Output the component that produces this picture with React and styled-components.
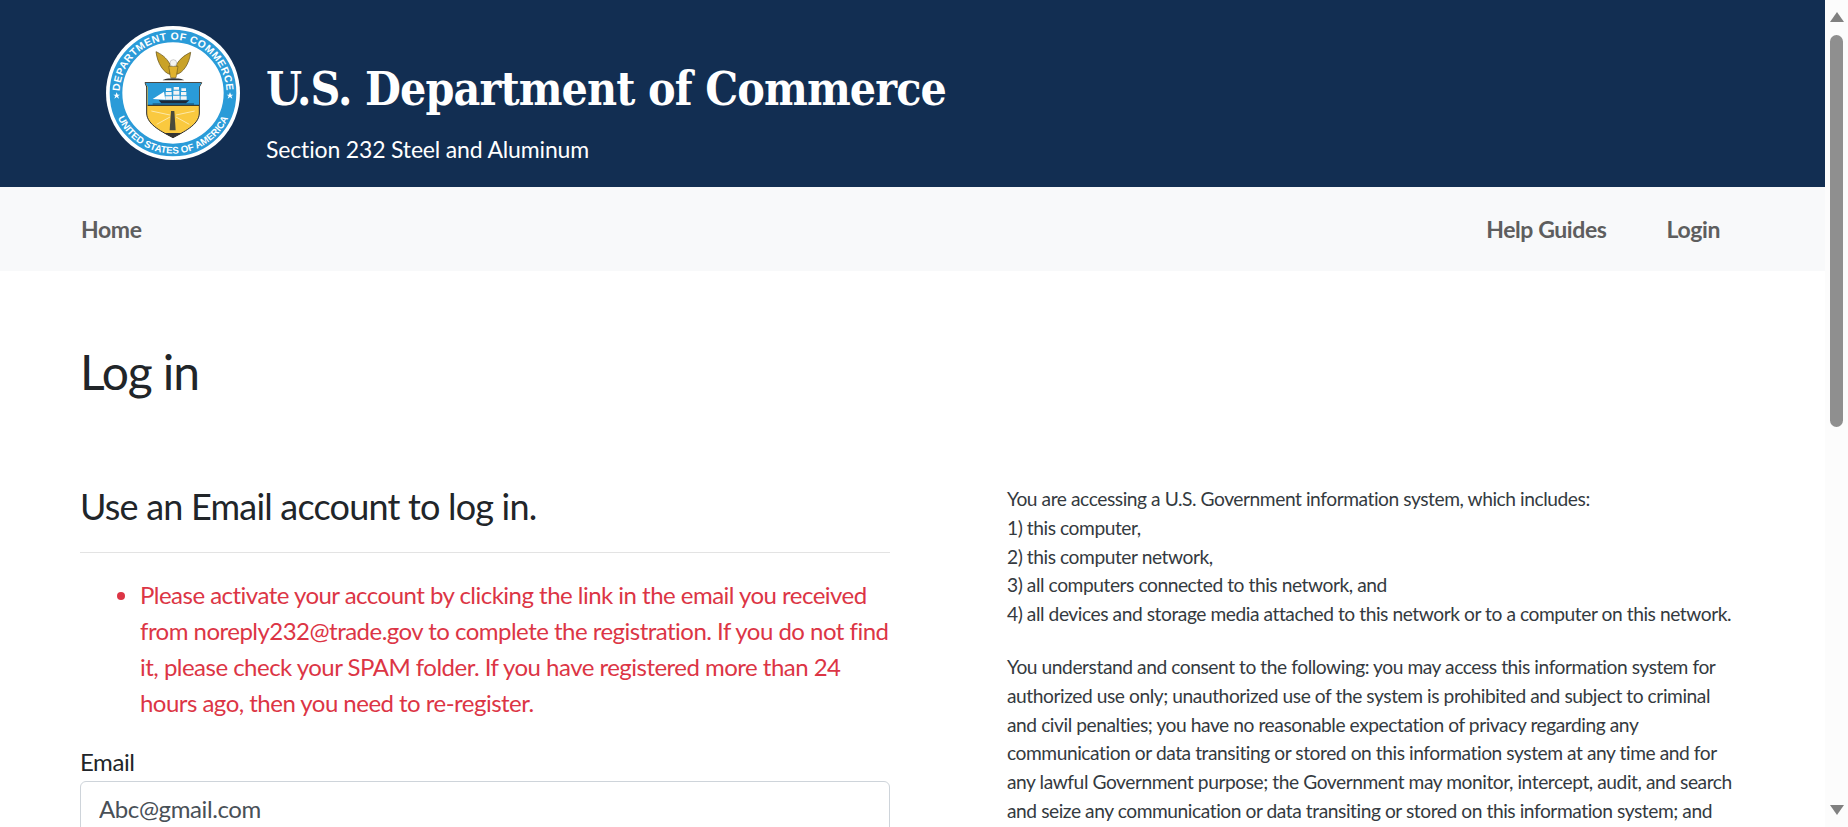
import React from 'react';
import styled, { createGlobalStyle } from 'styled-components';

const GlobalStyle = createGlobalStyle`
	html, body {
		margin: 0;
		height: 100%;
		overflow: hidden;
		background: #fff;
	}
	#root {
		height: 100%;
	}
	* {
		box-sizing: border-box;
	}
`;

const BODY_FONT = '"Lato", "Noto Sans", sans-serif';

const Shell = styled.div`
	display: flex;
	height: 827px;
	overflow: hidden;
	font-family: ${BODY_FONT};
	color: #212529;
`;

const Page = styled.div`
	flex: 1;
	min-width: 0;
	overflow: hidden;
`;

const ScrollRail = styled.div`
	display: flex;
	flex-direction: column;
	align-items: center;
	width: 23px;
	padding-top: 12px;
	background: #fcfcfc;
`;

const ScrollThumb = styled.div`
	width: 13px;
	height: 392px;
	margin: 13px 0 auto;
	border-radius: 7px;
	background: #8f8f8f;
`;

const ScrollArrow = styled.svg`
	display: block;
	width: 14px;
	height: 10px;
	margin-bottom: ${(props) => (props.$down ? '12px' : '0')};
	fill: #808080;
`;

const Banner = styled.header`
	display: flex;
	align-items: flex-start;
	height: 187px;
	padding: 26px 0 0 106px;
	background: #122e52;
	color: #fff;
`;

const SealSvg = styled.svg`
	flex: none;
	width: 134px;
	height: 134px;
`;

const BannerText = styled.div`
	display: flex;
	flex-direction: column;
	margin-left: 26px;
`;

const BannerTitle = styled.h1`
	margin: 37px 0 0;
	font-family: 'DejaVu Serif', serif;
	font-stretch: condensed;
	font-size: 46px;
	line-height: 52px;
	font-weight: 700;
	letter-spacing: -0.87px;
	white-space: nowrap;
`;

const BannerSub = styled.div`
	margin-top: 20px;
	font-size: 23px;
	line-height: 28px;
	letter-spacing: -0.16px;
`;

const NavBar = styled.nav`
	display: flex;
	align-items: center;
	justify-content: space-between;
	height: 84px;
	padding: 0 105px 0 81px;
	background: #f8f9fa;
`;

const NavGroup = styled.div`
	display: flex;
	gap: 60px;
`;

const NavLink = styled.a`
	color: #5e5e5e;
	font-size: 23px;
	font-weight: 700;
	letter-spacing: -0.4px;
	line-height: 30px;
	text-decoration: none;
`;

const Content = styled.main`
	padding: 0 80px;
`;

const PageTitle = styled.h1`
	margin: 69px 0 0;
	font-size: 48px;
	font-weight: 400;
	letter-spacing: -1.1px;
	line-height: 64px;
`;

const Columns = styled.div`
	display: grid;
	grid-template-columns: 810px 735px;
	column-gap: 117px;
	margin-top: 80px;
`;

const SectionTitle = styled.h2`
	margin: 0;
	padding-bottom: 24px;
	border-bottom: 1px solid #e3e3e3;
	font-size: 36px;
	font-weight: 400;
	letter-spacing: -0.8px;
	line-height: 44px;
`;

const ErrorList = styled.ul`
	margin: 24px 0 0;
	padding: 0 0 0 60px;
	color: #dc3545;
	font-size: 24px;
	letter-spacing: -0.52px;
	line-height: 36px;
`;

const FieldLabel = styled.label`
	display: block;
	margin-top: 23px;
	font-size: 24px;
	letter-spacing: -0.4px;
	line-height: 36px;
`;

const TextInput = styled.input`
	display: block;
	width: 100%;
	height: 58px;
	margin-top: 1px;
	padding: 0 18px 4px;
	border: 1px solid #ced4da;
	border-radius: 6px;
	color: #495057;
	font-family: ${BODY_FONT};
	font-size: 24px;
	letter-spacing: -0.4px;
`;

const Notice = styled.div`
	margin-top: 1px;
	color: #343a40;
	font-size: 19.2px;
	letter-spacing: -0.44px;
	line-height: 28.8px;
`;

const NoticeBlock = styled.p`
	margin: 0 0 24px;
`;

const Seal = () => (
	<SealSvg viewBox="48 45 402 402">
		<defs>
			<path id="sealTop" d="M 91.4 273.8 A 160 160 0 1 1 406.6 273.8" />
			<path id="sealBottom" d="M 69.8 277.6 A 182 182 0 0 0 428.2 277.6" />
		</defs>
		<circle cx="249" cy="246" r="201" fill="#fff" />
		<circle cx="249" cy="246" r="171" fill="none" stroke="#2a9bd8" strokeWidth="38" />
		<text fill="#fff" fontFamily="Liberation Sans" fontWeight="700" fontSize="31" letterSpacing="1.5">
			<textPath href="#sealTop" startOffset="50%" textAnchor="middle">DEPARTMENT OF COMMERCE</textPath>
		</text>
		<text fill="#fff" fontFamily="Liberation Sans" fontWeight="700" fontSize="29">
			<textPath href="#sealBottom" startOffset="50%" textAnchor="middle">UNITED STATES OF AMERICA</textPath>
		</text>
		<path d="M80 244l3 7h7l-6 4 3 8-7-5-7 5 3-8-6-4h7z" fill="#fff" />
		<path d="M420 244l3 7h7l-6 4 3 8-7-5-7 5 3-8-6-4h7z" fill="#fff" />

		{/* eagle */}
		<path d="M198 122c14 6 32 18 42 38v30c-18-4-38-32-42-68z" fill="#c9a227" stroke="#5c4a12" strokeWidth="2" />
		<path d="M302 124c-14 6-32 18-42 36v30c18-4 38-30 42-66z" fill="#c9a227" stroke="#5c4a12" strokeWidth="2" />
		<path d="M236 166l28 0-6 34h-16z" fill="#e0b22e" stroke="#5c4a12" strokeWidth="1.5" />
		<circle cx="250" cy="156" r="10" fill="#f4f4f0" stroke="#777" strokeWidth="1" />
		<path d="M218 208c8-8 56-8 64 0z" fill="#333" />

		{/* shield */}
		<path d="M165 215h170l-7 13v78c0 36-50 58-79 74-29-16-79-38-79-74v-78z" fill="#fac93f" stroke="#2b2b2b" strokeWidth="3" />
		<path d="M166 216h168l-7 12v55h-154v-55z" fill="#2a9bd8" />
		<path d="M173 283h154" stroke="#222" strokeWidth="3" />

		{/* ship */}
		<path d="M188 264l34-22 4 24z" fill="#fff" />
		<path d="M228 232h16v8h-16zM227 243h18v10h-18zM226 256h20v10h-20zM251 228h16v8h-16zM250 239h18v12h-18zM249 254h20v12h-20zM274 232h14v8h-14zM273 243h16v10h-16zM272 256h18v10h-18z" fill="#f4f4f4" />
		<path d="M206 268h92l-10 9h-74z" fill="#1d2a3a" />
		<path d="M188 279h124" stroke="#16425f" strokeWidth="3" />

		{/* lighthouse */}
		<path d="M184 300l56 12M314 300l-56 12M200 340l40-22M298 340l-40-22" stroke="#fde9a8" strokeWidth="3" />
		<path d="M243 300h10l4 58h-18z" fill="#4a4a3c" />
		<path d="M222 366h54l-27 14z" fill="#333" />
	</SealSvg>
);

export default function App() {
	return (
		<>
			<GlobalStyle />
			<Shell>
				<Page>
					<Banner>
						<Seal />
						<BannerText>
							<BannerTitle>U.S. Department of Commerce</BannerTitle>
							<BannerSub>Section 232 Steel and Aluminum</BannerSub>
						</BannerText>
					</Banner>
					<NavBar>
						<NavGroup>
							<NavLink href="#">Home</NavLink>
						</NavGroup>
						<NavGroup>
							<NavLink href="#">Help Guides</NavLink>
							<NavLink href="#">Login</NavLink>
						</NavGroup>
					</NavBar>
					<Content>
						<PageTitle>Log in</PageTitle>
						<Columns>
							<section>
								<SectionTitle>Use an Email account to log in.</SectionTitle>
								<ErrorList>
									<li>
										Please activate your account by clicking the link in the email you received from noreply232@trade.gov to complete the registration. If you do not find it, please check your SPAM folder. If you have registered more than 24 hours ago, then you need to re-register.
									</li>
								</ErrorList>
								<FieldLabel htmlFor="email">Email</FieldLabel>
								<TextInput id="email" defaultValue="Abc@gmail.com" />
							</section>
							<Notice>
								<NoticeBlock>
									You are accessing a U.S. Government information system, which includes:<br />
									1) this computer,<br />
									2) this computer network,<br />
									3) all computers connected to this network, and<br />
									4) all devices and storage media attached to this network or to a computer on this network.
								</NoticeBlock>
								<NoticeBlock>
									You understand and consent to the following: you may access this information system for authorized use only; unauthorized use of the system is prohibited and subject to criminal and civil penalties; you have no reasonable expectation of privacy regarding any communication or data transiting or stored on this information system at any time and for any lawful Government purpose; the Government may monitor, intercept, audit, and search and seize any communication or data transiting or stored on this information system; and
								</NoticeBlock>
							</Notice>
						</Columns>
					</Content>
				</Page>
				<ScrollRail>
					<ScrollArrow viewBox="0 0 14 10"><path d="M7 0l7 10H0z" /></ScrollArrow>
					<ScrollThumb />
					<ScrollArrow $down viewBox="0 0 14 10"><path d="M0 0h14L7 10z" /></ScrollArrow>
				</ScrollRail>
			</Shell>
		</>
	);
}
